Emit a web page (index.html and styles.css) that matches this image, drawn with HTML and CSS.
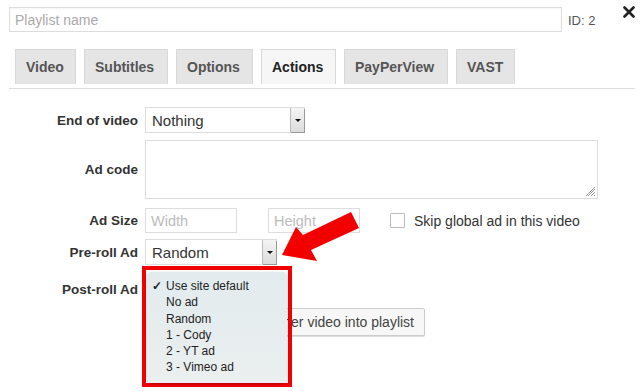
FILE: index.html
```html
<!DOCTYPE html>
<html>
<head>
<meta charset="utf-8">
<link rel="stylesheet" href="styles.css">
</head>
<body>
<div class="page">
  <div class="header">
    <input class="name" type="text" placeholder="Playlist name">
    <span class="id">ID: 2</span>
    <svg class="close" width="12" height="12" viewBox="0 0 12 12"><path d="M1.5 1.5L10.5 10.5M10.5 1.5L1.5 10.5" stroke="#222" stroke-width="2.6" stroke-linecap="round"/></svg>
  </div>
  <div class="tabs">
    <div class="tab">Video</div>
    <div class="tab">Subtitles</div>
    <div class="tab">Options</div>
    <div class="tab active">Actions</div>
    <div class="tab">PayPerView</div>
    <div class="tab">VAST</div>
  </div>
  <div class="form">
    <div class="row r-end">
      <div class="label">End of video</div>
      <div class="select w160"><span>Nothing</span><span class="btn"><i></i></span></div>
    </div>
    <div class="row r-code">
      <div class="label">Ad code</div>
      <div class="textarea">
        <svg class="grip" width="10" height="10" viewBox="0 0 10 10"><path d="M9 2L2 9M9 5L5 9M9 8L8 9M9 0L0 9" stroke="#999" stroke-width="1"/></svg>
      </div>
    </div>
    <div class="row r-size">
      <div class="label">Ad Size</div>
      <div class="inp">Width</div>
      <div class="inp h">Height</div>
      <div class="check"></div>
      <div class="checktext">Skip global ad in this video</div>
    </div>
    <div class="row r-pre">
      <div class="label">Pre-roll Ad</div>
      <div class="select w132"><span>Random</span><span class="btn"><i></i></span></div>
    </div>
    <div class="row r-post">
      <div class="label">Post-roll Ad</div>
    </div>
    <div class="row r-btn">
      <div class="button">Insert another video into playlist</div>
    </div>
  </div>

  <div class="popup">
    <div class="menu">
      <div class="item"><span class="tick">✓</span>Use site default</div>
      <div class="item">No ad</div>
      <div class="item">Random</div>
      <div class="item">1 - Cody</div>
      <div class="item">2 - YT ad</div>
      <div class="item">3 - Vimeo ad</div>
    </div>
  </div>

  <svg class="arrow" width="90" height="60" viewBox="275 205 90 60">
    <polygon points="282,255 296,227 303,235 351,212 359,228 311,250 317,261" fill="#f20000"/>
  </svg>
</div>
</body>
</html>
```
FILE: styles.css
```css
* { box-sizing: border-box; }
html, body { margin: 0; padding: 0; background: #fff; }
body { font-family: "Liberation Sans", Arial, sans-serif; color: #333; width: 640px; height: 391px; overflow: hidden; }
.page { position: relative; width: 640px; height: 391px; padding: 7px 5px 0 9px; }

.header { display: flex; align-items: center; height: 25px; }
.name { width: 553px; height: 25px; border: 1px solid #ddd; font-family: inherit; font-size: 14px; padding: 0 5px; color: #333; outline: none; box-shadow: inset 0 1px 2px rgba(0,0,0,0.04); }
.name::placeholder { color: #aaa; }
.id { margin-left: 6px; font-size: 13px; color: #555; margin-top: 1px; }
.close { margin-left: auto; margin-right: 0; align-self: flex-start; margin-top: -1px; }

.tabs { display: flex; gap: 8px; margin-top: 17px; padding-left: 6px; padding-bottom: 4px; border-bottom: 1px solid #ddd; }
.tab { height: 35px; padding: 0 10px; display: flex; align-items: center; background: #e5e5e5; border: 1px solid #d8d8d8; border-bottom: none; font-size: 14px; font-weight: bold; color: #555; }
.tab:nth-child(1) { width: 61px; }
.tab:nth-child(2) { width: 84px; }
.tab:nth-child(3) { width: 77px; }
.tab:nth-child(4) { width: 75px; }
.tab:nth-child(5) { width: 104px; }
.tab:nth-child(6) { width: 59px; }
.tab.active { background: #f6f6f6; color: #222; }

.form { display: flex; flex-direction: column; }
.row { display: flex; align-items: center; }
.label { width: 129px; text-align: right; font-size: 13.5px; font-weight: bold; color: #333; margin-right: 7px; }
.r-end { margin-top: 18px; height: 26px; }
.r-code { margin-top: 7px; height: 59px; }
.r-size { margin-top: 9px; height: 25px; }
.r-pre { margin-top: 6px; height: 26px; }
.r-post { margin-top: 11px; height: 26px; }
.r-btn { margin-top: 6px; height: 28px; }

.select { height: 26px; border: 1px solid #ddd; display: flex; align-items: center; justify-content: space-between; padding-left: 6px; font-size: 15px; color: #333; background: #fff; }
.w160 { width: 160px; }
.w132 { width: 132px; }
.select .btn { width: 14px; height: 24px; background: linear-gradient(#f4f4f4, #dcdcdc); border-left: 1px solid #bbb; box-shadow: 1px 1px 0 #999; display: flex; align-items: center; justify-content: center; }
.select .btn i { width: 0; height: 0; border-left: 3px solid transparent; border-right: 3px solid transparent; border-top: 3px solid #111; }

.textarea { width: 453px; height: 59px; border: 1px solid #ddd; position: relative; }
.grip { position: absolute; right: 1px; bottom: 1px; }

.inp { width: 92px; height: 25px; border: 1px solid #ddd; font-size: 14.5px; color: #bbb; padding-left: 5px; display: flex; align-items: center; }
.inp.h { margin-left: 31px; }
.check { width: 15px; height: 15px; border: 1px solid #bbb; margin-left: 30px; border-radius: 1px; }
.checktext { margin-left: 9px; font-size: 14px; color: #333; }

.button { margin-left: 187px; width: 229px; height: 28px; border: 1px solid #ccc; border-radius: 2px; background: #f7f7f7; font-size: 14px; color: #444; display: flex; align-items: center; justify-content: flex-end; padding-right: 10px; white-space: nowrap; box-shadow: 0 1px 0 #ddd; }

.popup { position: absolute; left: 142px; top: 266px; width: 150px; height: 121px; border: 4px solid #f00000; padding: 2px 1px 0 1px; }
.menu { width: 140px; height: 111px; background: linear-gradient(#e2ebee, #ebefef); border-radius: 5px; box-shadow: 0 1px 3px rgba(0,0,0,0.25); padding-top: 6px; }
.item { height: 16.3px; line-height: 16px; font-size: 12px; color: #222; padding-left: 19px; position: relative; }
.tick { position: absolute; left: 5px; top: 0; font-size: 12px; font-weight: bold; }

.arrow { position: absolute; left: 275px; top: 205px; }
```
